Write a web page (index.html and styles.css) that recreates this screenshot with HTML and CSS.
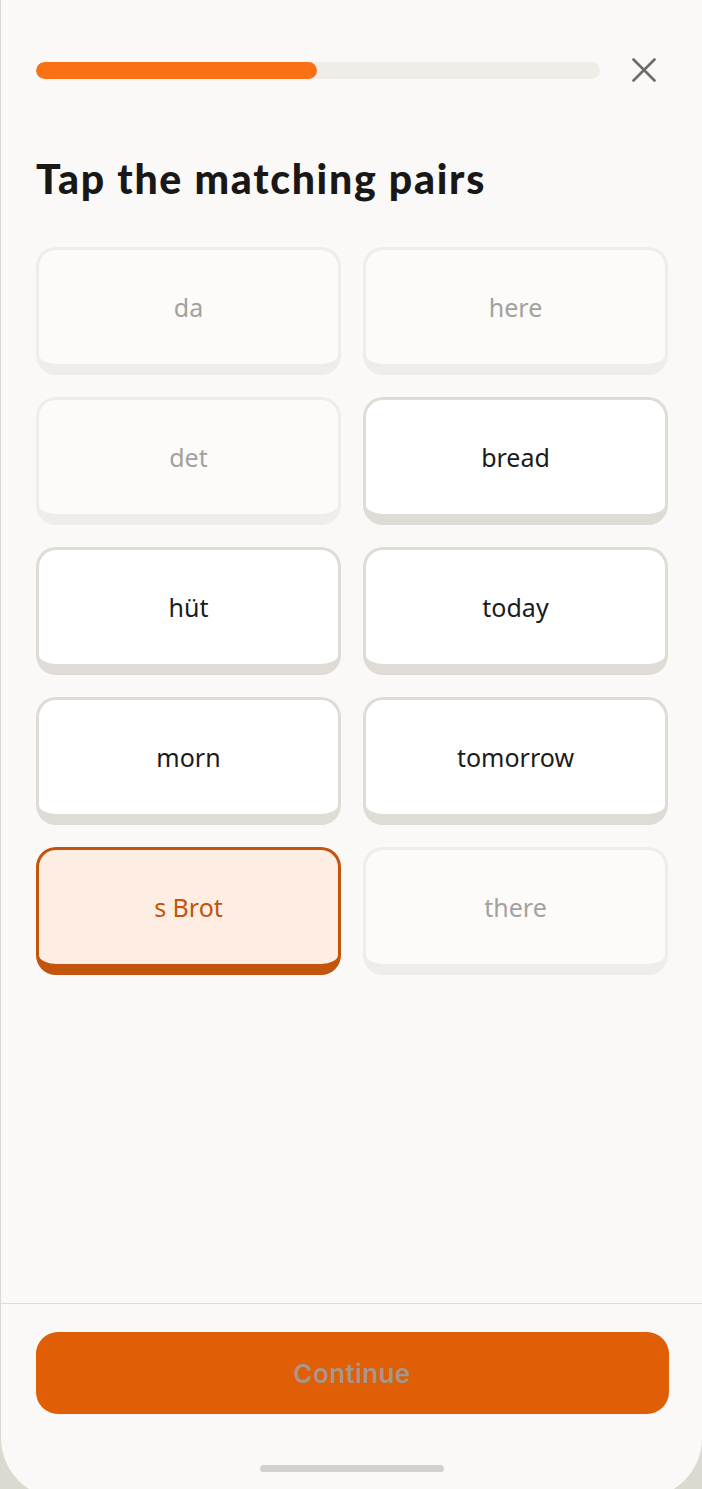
FILE: index.html
```html
<!DOCTYPE html>
<html lang="en">
<head>
<meta charset="utf-8">
<title>Tap the matching pairs</title>
<link rel="stylesheet" href="styles.css">
</head>
<body>
<div class="screen">
  <header class="topbar">
    <div class="progress"><div class="progress-fill" style="width:49.9%"></div></div>
    <button class="close" aria-label="Close">
      <svg width="24" height="24" viewBox="0 0 24 24"><path d="M1.5 1.5 L22.5 22.5 M22.5 1.5 L1.5 22.5" stroke="#6e6c69" stroke-width="2.6" stroke-linecap="round" fill="none"/></svg>
    </button>
  </header>
  <h1 class="title">Tap the matching pairs</h1>
  <main class="grid">
    <div class="card done">da</div>
    <div class="card done">here</div>
    <div class="card done">det</div>
    <div class="card">bread</div>
    <div class="card">hüt</div>
    <div class="card">today</div>
    <div class="card">morn</div>
    <div class="card">tomorrow</div>
    <div class="card selected">s Brot</div>
    <div class="card done">there</div>
  </main>
  <footer class="footer">
    <button class="continue">Continue</button>
    <div class="home-indicator"></div>
  </footer>
</div>
</body>
</html>
```

FILE: styles.css
```css
html, body {
  margin: 0;
  padding: 0;
}
body {
  background: #dcd9d0;
  width: 702px;
  height: 1489px;
  overflow: hidden;
  font-family: "Noto Sans", "Inter", sans-serif;
}
.screen {
  box-sizing: border-box;
  width: 702px;
  height: 1498px;
  background: #faf9f7;
  border-left: 1.5px solid #dad8d3;
  border-radius: 0 0 60px 60px;
  display: flex;
  flex-direction: column;
}
.topbar {
  display: flex;
  align-items: center;
  padding: 58px 36px 0 35px;
  gap: 22px;
}
.progress {
  flex: 1;
  height: 17px;
  border-radius: 9px;
  background: #f0ede9;
  overflow: hidden;
}
.progress-fill {
  height: 100%;
  background: #fa7014;
  border-radius: 9px;
}
.close {
  width: 44px;
  height: 24px;
  border: 0;
  background: none;
  padding: 0;
  display: flex;
  align-items: center;
  justify-content: center;
}
.title {
  margin: 72px 0 0 35px;
  font-family: "Lato", "Inter", sans-serif;
  font-weight: 900;
  font-size: 41px;
  line-height: 50px;
  color: #1a1817;
  letter-spacing: 1.7px;
}
.grid {
  display: grid;
  grid-template-columns: 305px 305px;
  column-gap: 22px;
  row-gap: 22px;
  padding: 0 0 0 35px;
  margin-top: 43px;
}
.card {
  box-sizing: border-box;
  height: 128px;
  border: 3px solid #dfdcd5;
  border-bottom-width: 11px;
  border-radius: 20px;
  background: #ffffff;
  display: flex;
  align-items: center;
  justify-content: center;
  font-size: 25px;
  color: #1c1b1a;
}
.card.done {
  background: #fcfbf9;
  border-color: #efede9;
  color: #a3a19e;
}
.card.selected {
  background: #fdede2;
  border-color: #c2540b;
  color: #c2540b;
}
.footer {
  margin-top: auto;
  border-top: 1.5px solid #dedcd7;
  padding: 28px 34px 0 35px;
  height: 195px;
  box-sizing: border-box;
  display: flex;
  flex-direction: column;
  align-items: center;
}
.continue {
  width: 633px;
  height: 82px;
  border: 0;
  border-radius: 22px;
  background: #df5e06;
  color: #a8968a;
  font-family: "Inter", sans-serif;
  font-weight: 600;
  font-size: 26px;
  letter-spacing: 0.4px;
}
.home-indicator {
  margin-top: 51px;
  width: 184px;
  height: 7px;
  border-radius: 4px;
  background: #d3d1ce;
}
```
